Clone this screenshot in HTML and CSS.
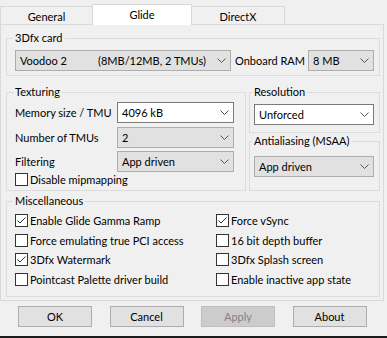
FILE: index.html
```html
<!DOCTYPE html>
<html>
<head>
    <title>Glide settings</title>
    <link rel="stylesheet" href="styles.css">
</head>
<body>
<div class="window">

    <div class="tabs">
        <div class="tab general">General</div>
        <div class="tab glide active">Glide</div>
        <div class="tab directx">DirectX</div>
    </div>

    <div class="page">

        <fieldset class="group card">
            <legend>3Dfx card</legend>
            <div class="card-row">
                <div class="combo voodoo">
                    <span class="model">Voodoo 2</span><span>(8MB/12MB, 2 TMUs)</span>
                    <svg class="chev" width="9" height="5"><polyline points="0.5,0.5 4.5,4.5 8.5,0.5"/></svg>
                </div>
                <span class="ram-label">Onboard RAM</span>
                <div class="combo ram">
                    <span>8 MB</span>
                    <svg class="chev" width="9" height="5"><polyline points="0.5,0.5 4.5,4.5 8.5,0.5"/></svg>
                </div>
            </div>
        </fieldset>

        <div class="middle">
            <fieldset class="group texturing">
                <legend>Texturing</legend>
                <div class="form">
                    <span>Memory size / TMU</span>
                    <div class="combo edit">
                        <span>4096 kB</span>
                        <svg class="chev" width="9" height="5"><polyline points="0.5,0.5 4.5,4.5 8.5,0.5"/></svg>
                    </div>
                    <span>Number of TMUs</span>
                    <div class="combo">
                        <span>2</span>
                        <svg class="chev" width="9" height="5"><polyline points="0.5,0.5 4.5,4.5 8.5,0.5"/></svg>
                    </div>
                    <span>Filtering</span>
                    <div class="combo">
                        <span>App driven</span>
                        <svg class="chev" width="9" height="5"><polyline points="0.5,0.5 4.5,4.5 8.5,0.5"/></svg>
                    </div>
                </div>
                <label class="check"><span class="box"></span>Disable mipmapping</label>
            </fieldset>

            <div class="side">
                <fieldset class="group resolution">
                    <legend>Resolution</legend>
                    <div class="combo edit">
                        <span>Unforced</span>
                        <svg class="chev" width="9" height="5"><polyline points="0.5,0.5 4.5,4.5 8.5,0.5"/></svg>
                    </div>
                </fieldset>
                <fieldset class="group aa">
                    <legend>Antialiasing (MSAA)</legend>
                    <div class="combo">
                        <span>App driven</span>
                        <svg class="chev" width="9" height="5"><polyline points="0.5,0.5 4.5,4.5 8.5,0.5"/></svg>
                    </div>
                </fieldset>
            </div>
        </div>

        <fieldset class="group misc">
            <legend>Miscellaneous</legend>
            <div class="checks">
                <label class="check"><span class="box"><svg width="11" height="11"><polyline points="1.5,5.5 4,8 9.5,2.5"/></svg></span>Enable Glide Gamma Ramp</label>
                <label class="check"><span class="box"><svg width="11" height="11"><polyline points="1.5,5.5 4,8 9.5,2.5"/></svg></span>Force vSync</label>
                <label class="check"><span class="box"></span>Force emulating true PCI access</label>
                <label class="check"><span class="box"></span>16 bit depth buffer</label>
                <label class="check"><span class="box"><svg width="11" height="11"><polyline points="1.5,5.5 4,8 9.5,2.5"/></svg></span>3Dfx Watermark</label>
                <label class="check"><span class="box"></span>3Dfx Splash screen</label>
                <label class="check"><span class="box"></span>Pointcast Palette driver build</label>
                <label class="check"><span class="box"></span>Enable inactive app state</label>
            </div>
        </fieldset>

    </div>

    <div class="buttons">
        <button>OK</button>
        <button>Cancel</button>
        <button class="disabled">Apply</button>
        <button>About</button>
    </div>

    <div class="taskbar"></div>
</div>
</body>
</html>
```

FILE: styles.css
```css
body {
    margin: 0;
    background: #f0f0f0;
    font: 11px "Segoe UI", Lato, sans-serif;
    color: #000;
}
.window {
    width: 387px;
    height: 338px;
    display: flex;
    flex-direction: column;
    overflow: hidden;
    white-space: nowrap;
}

/* tab strip */
.tabs {
    display: flex;
    align-items: flex-end;
    height: 24px;
}
.tab {
    box-sizing: border-box;
    height: 18px;
    line-height: 19px;
    border: 1px solid #d9d9d9;
    border-bottom: 0;
    margin-right: -1px;
    text-align: center;
}
.general { width: 93px; }
.glide   { width: 100px; }
.directx { width: 94px; }
.tab.active {
    height: 21px;
    line-height: 19px;
    background: #fff;
    margin-bottom: -1px;
    position: relative;
    z-index: 1;
}

.page {
    box-sizing: border-box;
    width: 384px;
    border: 1px solid #d9d9d9;
    padding: 5px 3px 3px 5px;
}

/* group boxes */
.group {
    margin: 0;
    min-width: 0;
    border: 1px solid #dcdcdc;
}
.group legend {
    padding: 0 2px;
    margin-left: -2px;
    line-height: 16px;
}
.card {
    padding: 4px 5px 4px 8px;
}
.card-row {
    display: flex;
    align-items: center;
}
.voodoo { width: 216px; }
.voodoo .model { width: 78px; }
.ram-label { margin-left: 4px; }
.ram {
    width: 66px;
    margin-left: auto;
}

.middle {
    display: grid;
    grid-template-columns: 240px 131px;
    column-gap: 3px;
    margin-top: 8px;
}
.texturing {
    padding: 2px 11px 3px 8px;
}
.form {
    display: grid;
    grid-template-columns: 102px 117px;
    grid-auto-rows: 21px;
    row-gap: 3.5px;
    align-items: center;
}
.side {
    display: flex;
    flex-direction: column;
}
.resolution {
    padding: 4px 5px 7px 4px;
}
.aa {
    flex: 1;
    padding: 7px 5px 0 4px;
}

.misc {
    margin-top: 2px;
    padding: 2px 5px 7px 8px;
}
.checks {
    display: grid;
    grid-template-columns: 201px auto;
    grid-auto-rows: 19.5px;
    align-items: center;
}

/* controls */
.combo {
    box-sizing: border-box;
    height: 21px;
    display: flex;
    align-items: center;
    padding: 0 4px 0 4px;
    background: #e1e1e1;
    border: 1px solid #adadad;
}
.combo.edit {
    background: #fff;
    border-color: #7a7a7a;
}
.chev {
    margin-left: auto;
    flex: none;
}
.chev polyline {
    fill: none;
    stroke: #555;
    stroke-width: 1;
}

.check {
    display: flex;
    align-items: center;
    height: 15px;
}
.box {
    box-sizing: border-box;
    width: 13px;
    height: 13px;
    border: 1px solid #333;
    background: #fff;
    margin-right: 2px;
    flex: none;
}
.box svg {
    display: block;
}
.box polyline {
    fill: none;
    stroke: #333;
    stroke-width: 1;
}

/* dialog buttons */
.buttons {
    display: flex;
    gap: 17.5px;
    padding-left: 18px;
    margin-top: 5px;
}
.buttons button {
    width: 74px;
    height: 21px;
    padding: 0;
    font: inherit;
    color: #000;
    background: #e1e1e1;
    border: 1px solid #adadad;
}
.buttons .disabled {
    color: #838383;
    background: #cccccc;
    border-color: #bfbfbf;
}

.taskbar {
    margin-top: auto;
    height: 2px;
    background: #1b1b1b;
}
```
